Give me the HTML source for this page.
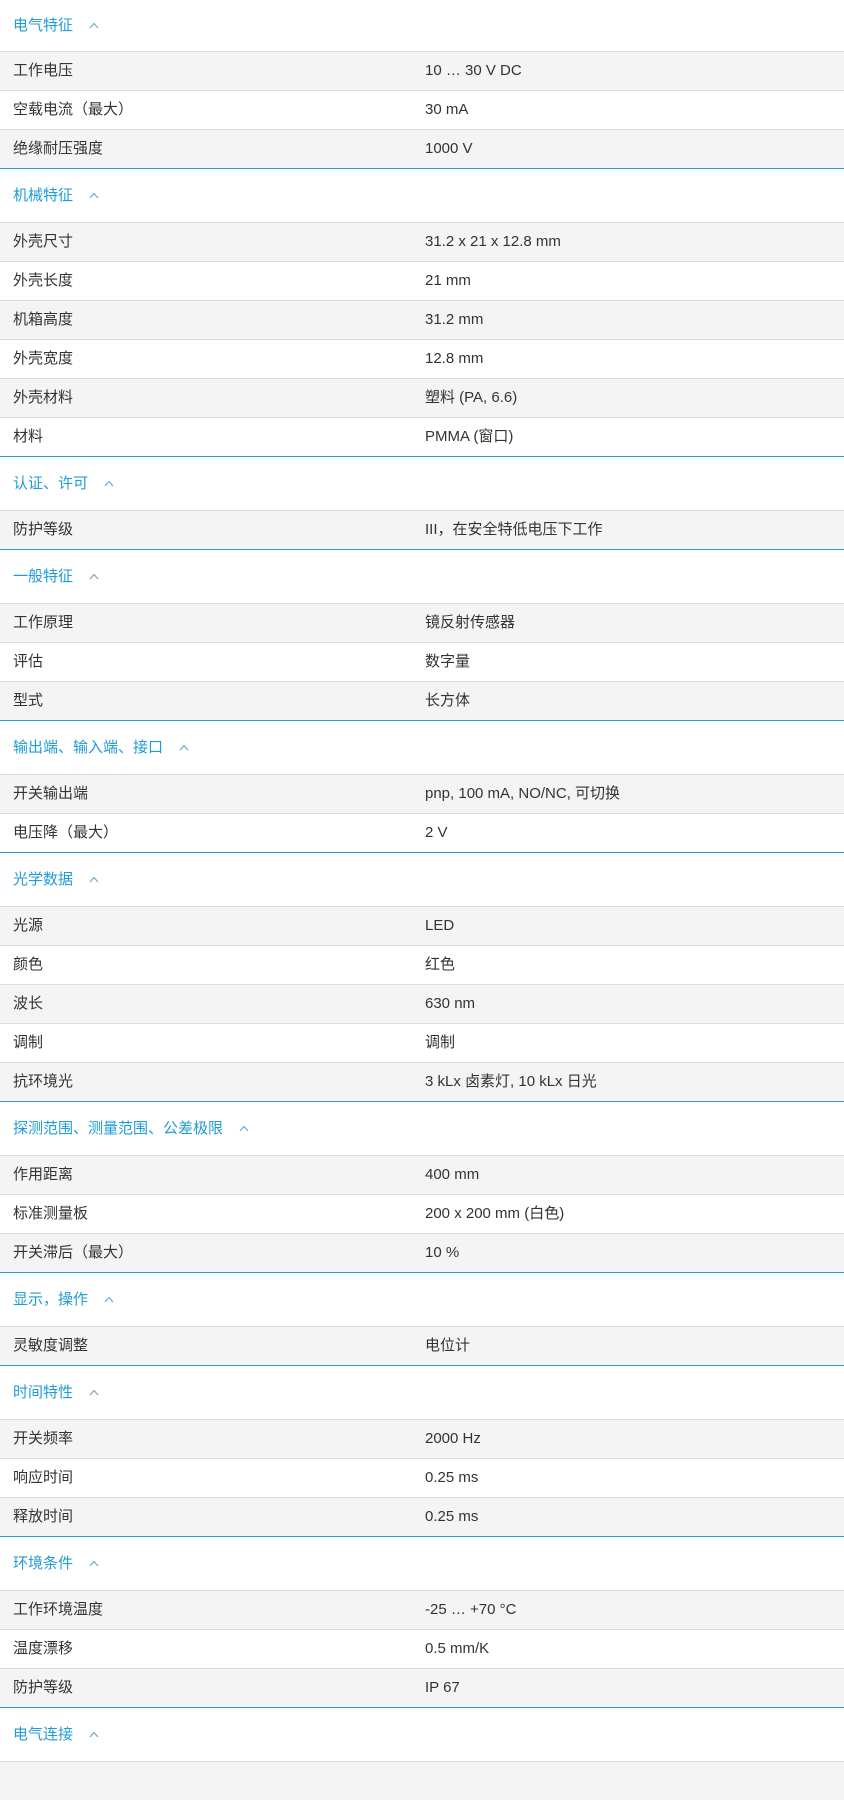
<!DOCTYPE html>
<html><head><meta charset="utf-8"><style>
*{margin:0;padding:0;box-sizing:border-box}
body{width:844px;height:1774px;overflow:hidden;background:#fff;font-family:"Liberation Sans","Noto Sans CJK SC",sans-serif;font-size:15px;color:#333}
.h{height:54px;border-top:1px solid #2a9fd6;display:flex;align-items:center;padding-left:13px;color:#1f9bd7;font-size:15px;line-height:20px}
.h.f{height:51px;border-top:none}
.h svg{margin-left:16px}
.r{height:39px;border-top:1px solid #dcdcdc;display:flex;line-height:37px}
.g{background:#f4f4f4}
.r span{display:block;height:37px}
.r span:first-child{width:412px;padding-left:13px}
.r span:last-child{padding-left:13px}
</style></head><body>
<div id="c"></div>
<script>
const d=[
["电气特征",[["工作电压","10 … 30 V DC"],["空载电流（最大）","30 mA"],["绝缘耐压强度","1000 V"]]],
["机械特征",[["外壳尺寸","31.2 x 21 x 12.8 mm"],["外壳长度","21 mm"],["机箱高度","31.2 mm"],["外壳宽度","12.8 mm"],["外壳材料","塑料 (PA, 6.6)"],["材料","PMMA (窗口)"]]],
["认证、许可",[["防护等级","III，在安全特低电压下工作"]]],
["一般特征",[["工作原理","镜反射传感器"],["评估","数字量"],["型式","长方体"]]],
["输出端、输入端、接口",[["开关输出端","pnp, 100 mA, NO/NC, 可切换"],["电压降（最大）","2 V"]]],
["光学数据",[["光源","LED"],["颜色","红色"],["波长","630 nm"],["调制","调制"],["抗环境光","3 kLx 卤素灯, 10 kLx 日光"]]],
["探测范围、测量范围、公差极限",[["作用距离","400 mm"],["标准测量板","200 x 200 mm (白色)"],["开关滞后（最大）","10 %"]]],
["显示，操作",[["灵敏度调整","电位计"]]],
["时间特性",[["开关频率","2000 Hz"],["响应时间","0.25 ms"],["释放时间","0.25 ms"]]],
["环境条件",[["工作环境温度","-25 … +70 °C"],["温度漂移","0.5 mm/K"],["防护等级","IP 67"]]],
["电气连接",[["",""]]]];
let h="";
d.forEach((s,i)=>{
h+=`<div class="h${i==0?' f':''}">${s[0]}<svg width="10" height="7" viewBox="0 0 10 7"><path d="M1 6L5 1.5L9 6" fill="none" stroke="#6fa8c8" stroke-width="1.2"/></svg></div>`;
s[1].forEach((r,j)=>{h+=`<div class="r${j%2==0?' g':''}"><span>${r[0]}</span><span>${r[1]}</span></div>`});
});
document.getElementById("c").innerHTML=h;
</script>
</body></html>
